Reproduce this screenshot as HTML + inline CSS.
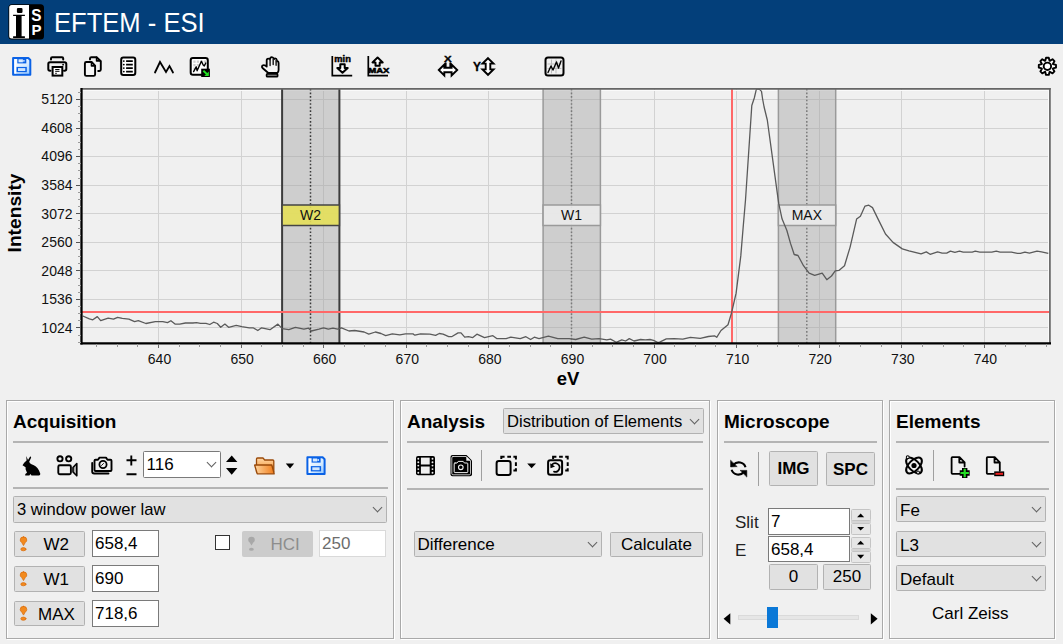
<!DOCTYPE html>
<html><head><meta charset="utf-8">
<style>
html,body{margin:0;padding:0;}
body{width:1063px;height:644px;overflow:hidden;background:#f0f0f0;position:relative;font-family:"Liberation Sans",sans-serif;color:#000;}
.abs{position:absolute;}
.title{position:absolute;left:0;top:0;width:1063px;height:44px;background:#033f7a;}
.ttl{position:absolute;left:54px;top:7px;font-size:27.5px;color:#fff;letter-spacing:0px;transform:scaleX(0.93);transform-origin:0 0;white-space:nowrap;}
.panel{position:absolute;top:400px;height:239px;border:1px solid #a9a9a9;box-shadow:1px 1px 0 #fff, inset 1px 1px 0 #fff;box-sizing:border-box;}
.ptitle{position:absolute;font-size:19px;font-weight:bold;white-space:nowrap;margin-top:1px;}
.sep{position:absolute;height:2px;background:#b4b4b4;}
.vsep{position:absolute;width:1px;background:#a0a0a0;}
.combo{position:absolute;box-sizing:border-box;background:#e1e1e1;border:1px solid #b2b2b2;border-radius:1.5px;font-size:17px;white-space:nowrap;}
.combo span{position:absolute;left:4px;}
.caret{position:absolute;width:6px;height:6px;border-right:1.3px solid #606060;border-bottom:1.3px solid #606060;transform:rotate(45deg);}
.btn{position:absolute;box-sizing:border-box;background:#e1e1e1;border:1px solid #b2b2b2;border-radius:1.5px;font-size:17px;white-space:nowrap;text-align:center;}
.inp{position:absolute;box-sizing:border-box;background:#fff;border:1px solid #7a7a7a;font-size:17px;white-space:nowrap;}
.inp span{position:absolute;left:2px;}
.lbl{position:absolute;font-size:17px;white-space:nowrap;}
</style></head>
<body>
<div class="title">
 <svg class="abs" style="left:6px;top:2px" width="40" height="40" viewBox="0 0 40 40">
  <rect x="2.4" y="2.2" width="35.6" height="35.4" rx="3.5" fill="#000"/>
  <path d="M5.7 3.1 H23 V36.6 H5.7 A2.5 2.5 0 0 1 3.2 34.1 V5.6 A2.5 2.5 0 0 1 5.7 3.1Z" fill="#fff"/>
  <rect x="10.9" y="5.9" width="5.6" height="5" rx="1.2" fill="#000"/>
  <path d="M7.1 12.7 H18.9 V14 H15.6 V34.3 H18.9 V36 H7.1 V34.3 H10 V14 H7.1Z" fill="#000"/>
  <text x="30.3" y="18.6" text-anchor="middle" font-family="Liberation Sans" font-weight="bold" font-size="17" fill="#fff" transform="translate(30.3,0) scale(0.9,1) translate(-30.3,0)">S</text>
  <text x="30.6" y="33.2" text-anchor="middle" font-family="Liberation Sans" font-weight="bold" font-size="15" fill="#fff">P</text>
 </svg>
 <div class="ttl">EFTEM - ESI</div>
</div>
<svg class="abs" style="left:0;top:0" width="1063" height="400" font-family="Liberation Sans, sans-serif"><line x1="158.5" y1="89" x2="158.5" y2="343" stroke="#d2d2d2" stroke-width="1"/><line x1="241.5" y1="89" x2="241.5" y2="343" stroke="#d2d2d2" stroke-width="1"/><line x1="323.5" y1="89" x2="323.5" y2="343" stroke="#d2d2d2" stroke-width="1"/><line x1="406.5" y1="89" x2="406.5" y2="343" stroke="#d2d2d2" stroke-width="1"/><line x1="488.5" y1="89" x2="488.5" y2="343" stroke="#d2d2d2" stroke-width="1"/><line x1="571.5" y1="89" x2="571.5" y2="343" stroke="#d2d2d2" stroke-width="1"/><line x1="654.5" y1="89" x2="654.5" y2="343" stroke="#d2d2d2" stroke-width="1"/><line x1="736.5" y1="89" x2="736.5" y2="343" stroke="#d2d2d2" stroke-width="1"/><line x1="819.5" y1="89" x2="819.5" y2="343" stroke="#d2d2d2" stroke-width="1"/><line x1="901.5" y1="89" x2="901.5" y2="343" stroke="#d2d2d2" stroke-width="1"/><line x1="984.5" y1="89" x2="984.5" y2="343" stroke="#d2d2d2" stroke-width="1"/><line x1="82" y1="327.5" x2="1049" y2="327.5" stroke="#d2d2d2" stroke-width="1"/><line x1="82" y1="299.5" x2="1049" y2="299.5" stroke="#d2d2d2" stroke-width="1"/><line x1="82" y1="270.5" x2="1049" y2="270.5" stroke="#d2d2d2" stroke-width="1"/><line x1="82" y1="242.5" x2="1049" y2="242.5" stroke="#d2d2d2" stroke-width="1"/><line x1="82" y1="213.5" x2="1049" y2="213.5" stroke="#d2d2d2" stroke-width="1"/><line x1="82" y1="185.5" x2="1049" y2="185.5" stroke="#d2d2d2" stroke-width="1"/><line x1="82" y1="156.5" x2="1049" y2="156.5" stroke="#d2d2d2" stroke-width="1"/><line x1="82" y1="128.5" x2="1049" y2="128.5" stroke="#d2d2d2" stroke-width="1"/><line x1="82" y1="99.5" x2="1049" y2="99.5" stroke="#d2d2d2" stroke-width="1"/><line x1="82" y1="90.5" x2="1048.5" y2="90.5" stroke="#fafafa" stroke-width="1"/><line x1="1048.5" y1="90" x2="1048.5" y2="342" stroke="#fafafa" stroke-width="1"/><rect x="282.1" y="89" width="57.3" height="254" fill="rgba(160,160,160,0.42)"/><line x1="310.5" y1="89" x2="310.5" y2="343" stroke="#3a3a3a" stroke-width="1.5" stroke-dasharray="1.6,1.96"/><line x1="282.1" y1="89" x2="282.1" y2="343" stroke="#3c3c3c" stroke-width="2"/><line x1="339.4" y1="89" x2="339.4" y2="343" stroke="#3c3c3c" stroke-width="2"/><rect x="282.1" y="205" width="57.3" height="20.5" fill="#e6e05a" fill-opacity="0.9" stroke="#444" stroke-width="1.5"/><text x="310.5" y="220" text-anchor="middle" font-size="14" fill="#111">W2</text><rect x="543.1" y="89" width="57.3" height="254" fill="rgba(160,160,160,0.42)"/><line x1="571.5" y1="89" x2="571.5" y2="343" stroke="#7a7a7a" stroke-width="1.5" stroke-dasharray="1.6,1.96"/><line x1="543.1" y1="89" x2="543.1" y2="343" stroke="#9a9a9a" stroke-width="1.5"/><line x1="600.4" y1="89" x2="600.4" y2="343" stroke="#9a9a9a" stroke-width="1.5"/><rect x="543.1" y="205" width="57.3" height="20.5" fill="#ebebeb" fill-opacity="0.9" stroke="#9a9a9a" stroke-width="1.5"/><text x="571.5" y="220" text-anchor="middle" font-size="14" fill="#111">W1</text><rect x="778.4" y="89" width="57.3" height="254" fill="rgba(160,160,160,0.42)"/><line x1="806.8" y1="89" x2="806.8" y2="343" stroke="#7a7a7a" stroke-width="1.5" stroke-dasharray="1.6,1.96"/><line x1="778.4" y1="89" x2="778.4" y2="343" stroke="#9a9a9a" stroke-width="1.5"/><line x1="835.7" y1="89" x2="835.7" y2="343" stroke="#9a9a9a" stroke-width="1.5"/><rect x="778.4" y="205" width="57.3" height="20.5" fill="#ebebeb" fill-opacity="0.9" stroke="#9a9a9a" stroke-width="1.5"/><text x="806.8" y="220" text-anchor="middle" font-size="14" fill="#111">MAX</text><line x1="82" y1="312" x2="1049" y2="312" stroke="#ff6868" stroke-width="2"/><line x1="732" y1="89" x2="732" y2="343" stroke="#ff6868" stroke-width="2"/><polyline points="82.8,316 89.4,318.8 92.8,319.8 97.3,316.6 100.7,320.7 108.2,318.2 113.5,319.2 117.6,317.3 122.3,318.4 128.9,319.2 134.6,321.6 138.3,320.7 145.9,323.5 155.3,321.6 162.8,321.6 167.5,322.6 170.9,320.7 175,324.1 179.7,324.1 185.4,323 192.9,323 196.6,322.6 200.4,323.3 206,323.3 209.8,324.5 213.6,322.2 217.3,323.5 220.7,327.3 224.9,324.1 228.6,327.3 236.2,325.4 241.8,326.7 249.3,327.8 253.1,327.8 257.8,330.5 261.6,327.8 270,329.7 277.9,324.1 282.2,328.6 288.8,329.7 295.4,327.3 303.9,329.2 308.6,328.2 311.4,331 318.9,329.2 323.6,327.8 328.3,329.2 333,328.2 337.7,329.2 341.5,327.8 349,331 354.7,330.5 364.1,332 368.8,334.2 375.4,332 381,333.5 385.7,335.7 392.3,333.9 399.8,334.8 405.5,333.9 413,333.9 414.9,335.2 420.5,333.9 429.9,334.2 435.6,335.4 439.3,333.5 443.1,334.2 448.7,336.7 451.6,336.7 458.1,332.9 461,332.9 464.7,337.2 468.5,336.7 472.8,337.6 476.9,334.2 484.5,337.6 492.9,335.7 496.7,338.6 506.1,338.6 510.8,337.2 520.2,338.6 525.9,336.7 530.6,339.5 534.3,337.2 539,338.6 548.4,336.1 557.8,338.6 569.1,338.6 575.7,339.5 584.2,337.2 591.7,339.1 599.2,338.6 606.8,339.9 610.5,339.1 616.2,342.3 621.8,339.9 625.6,341 629.3,338.6 634,341 640.6,339.5 645.3,339.9 650,339.5 653.5,340.3 658,342.5 660.2,341.8 666.3,338.8 674,338.6 682.8,339.2 690.4,337.3 700.2,338.3 708.4,336.5 714.5,335.8 716.7,337.3 721,330.5 728,324.7 731.5,313 736.1,293.2 740.8,255.9 743.1,228 745.5,200 751.8,105.5 754.3,98 756.2,89.8 757.6,89 759.5,89.4 761.5,91.4 762.6,99 764.1,107 767.3,120 778.7,203.4 782.1,219.1 786.8,230.3 790.5,243.4 794.2,254.5 798,255.5 803.5,265.7 809.1,273.2 814.7,275.4 822.2,273.2 826.8,279.7 831.5,276 835.2,270.9 838.9,270.4 844.5,265.7 850.1,247.1 856.6,219.1 860.4,216.3 865,206.1 868.8,205.2 872.5,207.6 878.1,219.1 885.5,234 893,242.4 902.3,248.9 909,250.9 921.1,253.9 926.3,251.9 930.1,254.3 937.6,251.9 942.1,253.1 946.7,253.1 950.4,251.2 954.9,252.4 959.5,251.2 963.2,252.1 972.2,252.1 975.3,251.2 979.8,252.1 991.8,252.1 996.3,251.2 1000.1,252.1 1011.4,252.1 1017.4,253.4 1020.4,253.4 1024.9,252.1 1029.4,253.1 1037,251.2 1041.5,251.9 1048.3,253.4" fill="none" stroke="#5a5a5a" stroke-width="1.3" stroke-linejoin="round"/><line x1="81" y1="88.9" x2="1050.6" y2="88.9" stroke="#666" stroke-width="1.7"/><line x1="1049.9" y1="88" x2="1049.9" y2="344" stroke="#666" stroke-width="1.7"/><line x1="81.5" y1="88" x2="81.5" y2="344.6" stroke="#000" stroke-width="2.3"/><line x1="80.4" y1="343.4" x2="1051" y2="343.4" stroke="#000" stroke-width="2.3"/><line x1="78" y1="342.5" x2="81" y2="342.5" stroke="#999" stroke-width="1"/><line x1="78" y1="335.5" x2="81" y2="335.5" stroke="#999" stroke-width="1"/><line x1="76" y1="327.5" x2="81" y2="327.5" stroke="#555" stroke-width="1"/><line x1="78" y1="320.5" x2="81" y2="320.5" stroke="#999" stroke-width="1"/><line x1="78" y1="313.5" x2="81" y2="313.5" stroke="#999" stroke-width="1"/><line x1="78" y1="306.5" x2="81" y2="306.5" stroke="#999" stroke-width="1"/><line x1="76" y1="299.5" x2="81" y2="299.5" stroke="#555" stroke-width="1"/><line x1="78" y1="292.5" x2="81" y2="292.5" stroke="#999" stroke-width="1"/><line x1="78" y1="285.5" x2="81" y2="285.5" stroke="#999" stroke-width="1"/><line x1="78" y1="278.5" x2="81" y2="278.5" stroke="#999" stroke-width="1"/><line x1="76" y1="270.5" x2="81" y2="270.5" stroke="#555" stroke-width="1"/><line x1="78" y1="263.5" x2="81" y2="263.5" stroke="#999" stroke-width="1"/><line x1="78" y1="256.5" x2="81" y2="256.5" stroke="#999" stroke-width="1"/><line x1="78" y1="249.5" x2="81" y2="249.5" stroke="#999" stroke-width="1"/><line x1="76" y1="242.5" x2="81" y2="242.5" stroke="#555" stroke-width="1"/><line x1="78" y1="235.5" x2="81" y2="235.5" stroke="#999" stroke-width="1"/><line x1="78" y1="228.5" x2="81" y2="228.5" stroke="#999" stroke-width="1"/><line x1="78" y1="220.5" x2="81" y2="220.5" stroke="#999" stroke-width="1"/><line x1="76" y1="213.5" x2="81" y2="213.5" stroke="#555" stroke-width="1"/><line x1="78" y1="206.5" x2="81" y2="206.5" stroke="#999" stroke-width="1"/><line x1="78" y1="199.5" x2="81" y2="199.5" stroke="#999" stroke-width="1"/><line x1="78" y1="192.5" x2="81" y2="192.5" stroke="#999" stroke-width="1"/><line x1="76" y1="185.5" x2="81" y2="185.5" stroke="#555" stroke-width="1"/><line x1="78" y1="178.5" x2="81" y2="178.5" stroke="#999" stroke-width="1"/><line x1="78" y1="170.5" x2="81" y2="170.5" stroke="#999" stroke-width="1"/><line x1="78" y1="163.5" x2="81" y2="163.5" stroke="#999" stroke-width="1"/><line x1="76" y1="156.5" x2="81" y2="156.5" stroke="#555" stroke-width="1"/><line x1="78" y1="149.5" x2="81" y2="149.5" stroke="#999" stroke-width="1"/><line x1="78" y1="142.5" x2="81" y2="142.5" stroke="#999" stroke-width="1"/><line x1="78" y1="135.5" x2="81" y2="135.5" stroke="#999" stroke-width="1"/><line x1="76" y1="128.5" x2="81" y2="128.5" stroke="#555" stroke-width="1"/><line x1="78" y1="121.5" x2="81" y2="121.5" stroke="#999" stroke-width="1"/><line x1="78" y1="113.5" x2="81" y2="113.5" stroke="#999" stroke-width="1"/><line x1="78" y1="106.5" x2="81" y2="106.5" stroke="#999" stroke-width="1"/><line x1="76" y1="99.5" x2="81" y2="99.5" stroke="#555" stroke-width="1"/><line x1="78" y1="92.5" x2="81" y2="92.5" stroke="#999" stroke-width="1"/><text x="72.5" y="332.6" text-anchor="end" font-size="14" fill="#111">1024</text><text x="72.5" y="304.1" text-anchor="end" font-size="14" fill="#111">1536</text><text x="72.5" y="275.5" text-anchor="end" font-size="14" fill="#111">2048</text><text x="72.5" y="247.0" text-anchor="end" font-size="14" fill="#111">2560</text><text x="72.5" y="218.5" text-anchor="end" font-size="14" fill="#111">3072</text><text x="72.5" y="189.9" text-anchor="end" font-size="14" fill="#111">3584</text><text x="72.5" y="161.4" text-anchor="end" font-size="14" fill="#111">4096</text><text x="72.5" y="132.8" text-anchor="end" font-size="14" fill="#111">4608</text><text x="72.5" y="104.3" text-anchor="end" font-size="14" fill="#111">5120</text><line x1="96.5" y1="344" x2="96.5" y2="347" stroke="#999" stroke-width="1"/><line x1="117.5" y1="344" x2="117.5" y2="347" stroke="#999" stroke-width="1"/><line x1="137.5" y1="344" x2="137.5" y2="347" stroke="#999" stroke-width="1"/><line x1="158.5" y1="344" x2="158.5" y2="348" stroke="#666" stroke-width="1"/><text x="159.5" y="363.6" text-anchor="middle" font-size="14" fill="#111">640</text><line x1="179.5" y1="344" x2="179.5" y2="347" stroke="#999" stroke-width="1"/><line x1="199.5" y1="344" x2="199.5" y2="347" stroke="#999" stroke-width="1"/><line x1="220.5" y1="344" x2="220.5" y2="347" stroke="#999" stroke-width="1"/><line x1="241.5" y1="344" x2="241.5" y2="348" stroke="#666" stroke-width="1"/><text x="242.1" y="363.6" text-anchor="middle" font-size="14" fill="#111">650</text><line x1="261.5" y1="344" x2="261.5" y2="347" stroke="#999" stroke-width="1"/><line x1="282.5" y1="344" x2="282.5" y2="347" stroke="#999" stroke-width="1"/><line x1="303.5" y1="344" x2="303.5" y2="347" stroke="#999" stroke-width="1"/><line x1="323.5" y1="344" x2="323.5" y2="348" stroke="#666" stroke-width="1"/><text x="324.7" y="363.6" text-anchor="middle" font-size="14" fill="#111">660</text><line x1="344.5" y1="344" x2="344.5" y2="347" stroke="#999" stroke-width="1"/><line x1="364.5" y1="344" x2="364.5" y2="347" stroke="#999" stroke-width="1"/><line x1="385.5" y1="344" x2="385.5" y2="347" stroke="#999" stroke-width="1"/><line x1="406.5" y1="344" x2="406.5" y2="348" stroke="#666" stroke-width="1"/><text x="407.3" y="363.6" text-anchor="middle" font-size="14" fill="#111">670</text><line x1="426.5" y1="344" x2="426.5" y2="347" stroke="#999" stroke-width="1"/><line x1="447.5" y1="344" x2="447.5" y2="347" stroke="#999" stroke-width="1"/><line x1="468.5" y1="344" x2="468.5" y2="347" stroke="#999" stroke-width="1"/><line x1="488.5" y1="344" x2="488.5" y2="348" stroke="#666" stroke-width="1"/><text x="489.9" y="363.6" text-anchor="middle" font-size="14" fill="#111">680</text><line x1="509.5" y1="344" x2="509.5" y2="347" stroke="#999" stroke-width="1"/><line x1="530.5" y1="344" x2="530.5" y2="347" stroke="#999" stroke-width="1"/><line x1="550.5" y1="344" x2="550.5" y2="347" stroke="#999" stroke-width="1"/><line x1="571.5" y1="344" x2="571.5" y2="348" stroke="#666" stroke-width="1"/><text x="572.5" y="363.6" text-anchor="middle" font-size="14" fill="#111">690</text><line x1="592.5" y1="344" x2="592.5" y2="347" stroke="#999" stroke-width="1"/><line x1="612.5" y1="344" x2="612.5" y2="347" stroke="#999" stroke-width="1"/><line x1="633.5" y1="344" x2="633.5" y2="347" stroke="#999" stroke-width="1"/><line x1="654.5" y1="344" x2="654.5" y2="348" stroke="#666" stroke-width="1"/><text x="655.0" y="363.6" text-anchor="middle" font-size="14" fill="#111">700</text><line x1="674.5" y1="344" x2="674.5" y2="347" stroke="#999" stroke-width="1"/><line x1="695.5" y1="344" x2="695.5" y2="347" stroke="#999" stroke-width="1"/><line x1="715.5" y1="344" x2="715.5" y2="347" stroke="#999" stroke-width="1"/><line x1="736.5" y1="344" x2="736.5" y2="348" stroke="#666" stroke-width="1"/><text x="737.6" y="363.6" text-anchor="middle" font-size="14" fill="#111">710</text><line x1="757.5" y1="344" x2="757.5" y2="347" stroke="#999" stroke-width="1"/><line x1="777.5" y1="344" x2="777.5" y2="347" stroke="#999" stroke-width="1"/><line x1="798.5" y1="344" x2="798.5" y2="347" stroke="#999" stroke-width="1"/><line x1="819.5" y1="344" x2="819.5" y2="348" stroke="#666" stroke-width="1"/><text x="820.2" y="363.6" text-anchor="middle" font-size="14" fill="#111">720</text><line x1="839.5" y1="344" x2="839.5" y2="347" stroke="#999" stroke-width="1"/><line x1="860.5" y1="344" x2="860.5" y2="347" stroke="#999" stroke-width="1"/><line x1="881.5" y1="344" x2="881.5" y2="347" stroke="#999" stroke-width="1"/><line x1="901.5" y1="344" x2="901.5" y2="348" stroke="#666" stroke-width="1"/><text x="902.8" y="363.6" text-anchor="middle" font-size="14" fill="#111">730</text><line x1="922.5" y1="344" x2="922.5" y2="347" stroke="#999" stroke-width="1"/><line x1="943.5" y1="344" x2="943.5" y2="347" stroke="#999" stroke-width="1"/><line x1="963.5" y1="344" x2="963.5" y2="347" stroke="#999" stroke-width="1"/><line x1="984.5" y1="344" x2="984.5" y2="348" stroke="#666" stroke-width="1"/><text x="985.4" y="363.6" text-anchor="middle" font-size="14" fill="#111">740</text><line x1="1005.5" y1="344" x2="1005.5" y2="347" stroke="#999" stroke-width="1"/><line x1="1025.5" y1="344" x2="1025.5" y2="347" stroke="#999" stroke-width="1"/><line x1="1046.5" y1="344" x2="1046.5" y2="347" stroke="#999" stroke-width="1"/><text x="568" y="384.5" text-anchor="middle" font-size="18.5" font-weight="bold" fill="#000">eV</text><text transform="translate(21.3,213) rotate(-90)" text-anchor="middle" font-size="19.2" font-weight="bold" fill="#000">Intensity</text></svg>
<!-- toolbar -->
<svg class="abs" style="left:0;top:50px" width="1063" height="32" viewBox="0 50 1063 32" fill="none" stroke="#000" stroke-width="2" stroke-linejoin="round" stroke-linecap="round">
 <!-- save blue -->
 <defs><linearGradient id="flop2" x1="0" y1="0" x2="1" y2="1"><stop offset="0" stop-color="#ffffff"/><stop offset="0.6" stop-color="#d6ebff"/><stop offset="1" stop-color="#8cc4ff"/></linearGradient></defs>
 <g>
  <path d="M13.1 58 H28.3 L30.3 60 V74.7 H13.1Z" fill="url(#flop2)" stroke="#0a62e6" stroke-width="2"/>
  <rect x="14.6" y="59.5" width="1.6" height="14" fill="#fff" stroke="none"/>
  <rect x="17.3" y="58.2" width="9" height="5.2" fill="#0a62e6" stroke="none"/>
  <rect x="18.5" y="59.3" width="4.4" height="3" fill="#d8ebff" stroke="none"/>
  <circle cx="23.9" cy="60.8" r="0.9" fill="#d8ebff" stroke="none"/>
  <rect x="16.5" y="66.9" width="10.3" height="5.3" fill="#0a62e6" stroke="none"/>
  <rect x="18" y="68.1" width="7.3" height="2.9" fill="#cfe6ff" stroke="none"/>
 </g>
 <!-- printer -->
 <g>
  <path d="M51 59.5 V58.5 Q51 57.3 52.2 57.3 H62 Q63.2 57.3 63.2 58.5 V59.5" stroke-width="2"/>
  <path d="M50.5 70.8 H50 Q48.3 70.8 48.3 69 V64 Q48.3 62.2 50 62.2 H64.5 Q66.3 62.2 66.3 64 V69 Q66.3 70.8 64.5 70.8 H64" stroke-width="2"/>
  <circle cx="63.1" cy="64.7" r="0.9" fill="#000" stroke="none"/>
  <rect x="52.6" y="67" width="9.7" height="8.6" fill="#fff" stroke-width="2" stroke-linejoin="miter"/>
  <path d="M55.2 69.5 H59.5 M55.2 71.3 H59.5 M55.2 73.3 H56.8" stroke-width="1" stroke-linecap="butt"/>
 </g>
 <!-- copy -->
 <g>
  <path d="M90 59.4 V58.6 Q90 57.2 91.4 57.2 H96.6 L100.8 61.2 V69.6 Q100.8 71 99.4 71 H98.2" stroke-width="1.9"/>
  <path d="M96.6 57.4 V60.9 H100.4" stroke-width="1.6"/>
  <path d="M86.3 62 H91.6 L95.1 65.6 V74.5 Q95.1 75.9 93.7 75.9 H86.3 Q84.9 75.9 84.9 74.5 V63.4 Q84.9 62 86.3 62Z" fill="#f6f6f6" stroke-width="1.9"/>
  <path d="M91.5 62.2 V65.9 H95" stroke-width="1.6"/>
 </g>
 <!-- list -->
 <g>
  <rect x="121.2" y="57.6" width="14.1" height="17.3" rx="2.2" fill="#fff" stroke-width="2"/>
  <path d="M126.1 61.1 H132.8 M126.1 64.6 H132.8 M126.1 68.1 H132.8 M126.1 71.6 H132.8" stroke-width="1.6" stroke-linecap="butt"/>
  <g fill="#000" stroke="none"><circle cx="123.8" cy="61.1" r="0.9"/><circle cx="123.8" cy="64.6" r="0.9"/><circle cx="123.8" cy="68.1" r="0.9"/><circle cx="123.8" cy="71.6" r="0.9"/></g>
 </g>
 <!-- zigzag -->
 <path d="M155 72.5 L160 62 L166 72 L169.5 66 L173 72.5" stroke-width="1.8" stroke-linejoin="miter"/>
 <!-- chart export -->
 <g>
  <rect x="190.7" y="58" width="17.1" height="16.7" rx="2.2" fill="#fff" stroke-width="2"/>
  <g fill="#cfcfcf" stroke="none"><rect x="193.3" y="60.5" width="2.3" height="2.3"/><rect x="196.8" y="60.5" width="2.3" height="2.3"/><rect x="200.3" y="60.5" width="2.3" height="2.3"/><rect x="203.8" y="60.5" width="2.3" height="2.3"/><rect x="193.3" y="64" width="2.3" height="2.3"/><rect x="196.8" y="64" width="2.3" height="2.3"/><rect x="193.3" y="67.5" width="2.3" height="2.3"/></g>
  <path d="M193.6 71.6 L196.2 66.8 L197.1 70.7 L201.4 61.3 L203.2 65 L204.3 65.9 L205.8 63" stroke-width="1.4"/>
  <rect x="201.2" y="68.7" width="8.7" height="8.3" fill="#000" stroke="none"/>
  <path d="M203.4 70.7 L207.8 75" stroke="#22e022" stroke-width="1.9" stroke-linecap="butt"/>
  <path d="M208.8 71.5 V76 H204.3Z" fill="#22e022" stroke="none"/>
 </g>
 <!-- hand -->
 <path d="M268.3 73 L262.8 68.2 Q261.2 66.8 262.6 65.5 Q263.8 64.6 265.2 65.5 L266.7 66.6 V60.2 Q266.7 58.6 268.3 58.6 Q269.6 58.6 269.9 59.6 Q270.2 57.2 271.8 57.2 Q273.4 57.2 273.8 59.3 Q274.2 58.4 275.2 58.4 Q276.6 58.4 276.8 60.2 V61.5 Q277 61 277.6 61.2 Q278.6 61.5 278.6 63 V70 Q278.6 72 277.3 73Z" stroke-width="1.8" fill="#f4f4f4"/>
 <path d="M270.1 59.8 V65.6 M273.2 59.6 V64.6 M276.1 60.5 V65.3" stroke-width="1.5" stroke="#222"/>
 <rect x="266.6" y="73.9" width="11" height="2.8" rx="0.8" fill="#9a9a9a" stroke-width="1.7"/>
 <!-- min -->
 <g>
  <path d="M332.3 56 V75.6 H352.2" stroke-width="1.7" stroke-linecap="butt" stroke-linejoin="miter"/>
  <text x="342.6" y="62.3" text-anchor="middle" font-size="8.6" font-weight="bold" fill="#000" stroke="#000" stroke-width="0.45" font-family="Liberation Sans" transform="translate(342.6,0) scale(1.08,1) translate(-342.6,0)">min</text>
  <path d="M340.3 64.3 H344.7 V67.9 H347.7 L342.5 72.8 L337.3 67.9 H340.3Z" stroke-width="2" fill="#fff"/>
 </g>
 <!-- max -->
 <g>
  <path d="M368.3 56 V75.6 H388" stroke-width="1.7" stroke-linecap="butt" stroke-linejoin="miter"/>
  <path d="M375.5 65.8 H379.7 V62.4 H382.7 L377.6 57.5 L372.5 62.4 H375.5Z" stroke-width="2" fill="#fff"/>
  <text x="378.8" y="73.2" text-anchor="middle" font-size="6.6" font-weight="bold" fill="#000" stroke="#000" stroke-width="0.5" font-family="Liberation Sans" transform="translate(378.8,0) scale(1.45,1) translate(-378.8,0)">MAX</text>
 </g>
 <!-- X arrows -->
 <g>
  <text x="447.9" y="62.5" text-anchor="middle" font-size="9.2" font-weight="bold" fill="#000" stroke="#000" stroke-width="0.4" font-family="Liberation Sans" transform="translate(447.9,0) scale(1.25,1) translate(-447.9,0)">X</text>
  <path d="M438.8 70 L444.3 64.5 V67.8 H451.6 V64.5 L457.2 70 L451.6 75.5 V72.2 H444.3 V75.5Z" stroke-width="1.9" fill="#fff" stroke-linejoin="miter"/>
  <path d="M445.8 63 V67 M450.2 63 V67" stroke-width="1.6"/>
 </g>
 <!-- Y arrows -->
 <g>
  <text x="477.1" y="70.7" text-anchor="middle" font-size="12" font-weight="bold" fill="#000" stroke="#000" stroke-width="0.3" font-family="Liberation Sans">Y</text>
  <path d="M488 58.2 L493.5 63.6 H490.3 V69.4 H493.5 L488 74.8 L482.5 69.4 H485.7 V63.6 H482.5Z" stroke-width="1.9" fill="#fff" stroke-linejoin="miter"/>
 </g>
 <!-- chart icon -->
 <g>
  <rect x="545.5" y="57.5" width="18" height="18" rx="2.5"/>
  <path d="M548 64 H561 M548 68.5 H561 M551.5 60 V73 M556 60 V73" stroke="#bbb" stroke-width="1"/>
  <path d="M548 72.5 L551 66 L553 70 L556.5 62 L558.5 68 L561 61" stroke-width="1.4"/>
 </g>
 <!-- gear -->
 <g transform="translate(1047.4,66.3)">
  <path d="M-2.15,-5.60 L-1.36,-8.59 L1.36,-8.59 L2.15,-5.60 L2.44,-5.48 L5.11,-7.04 L7.04,-5.11 L5.48,-2.44 L5.60,-2.15 L8.59,-1.36 L8.59,1.36 L5.60,2.15 L5.48,2.44 L7.04,5.11 L5.11,7.04 L2.44,5.48 L2.15,5.60 L1.36,8.59 L-1.36,8.59 L-2.15,5.60 L-2.44,5.48 L-5.11,7.04 L-7.04,5.11 L-5.48,2.44 L-5.60,2.15 L-8.59,1.36 L-8.59,-1.36 L-5.60,-2.15 L-5.48,-2.44 L-7.04,-5.11 L-5.11,-7.04 L-2.44,-5.48Z" stroke-width="1.9" fill="#fff"/>
  <circle r="3.7" stroke-width="1.9"/>
 </g>
</svg>

<!-- panels -->
<div class="panel" style="left:6px;width:388px"></div>
<div class="panel" style="left:400px;width:310px"></div>
<div class="panel" style="left:717px;width:166px"></div>
<div class="panel" style="left:889px;width:166px"></div>

<!-- Acquisition -->
<div class="ptitle" style="left:13px;top:410px">Acquisition</div>
<div class="sep" style="left:13px;top:441px;width:375px"></div>
<div class="sep" style="left:13px;top:487px;width:375px"></div>
<div class="combo" style="left:143px;top:451px;width:78px;height:27px;background:#fff;border-color:#7a7a7a"><span style="top:3px;left:2.5px">116</span><i class="caret" style="left:64px;top:7px"></i></div>
<div class="combo" style="left:13px;top:496px;width:374px;height:27px"><span style="top:3px;left:3px;font-size:16.6px">3 window power law</span><i class="caret" style="left:360px;top:7px"></i></div>
<div class="btn" style="left:14px;top:531px;width:71px;height:26px"></div>
<div class="lbl" style="left:43.5px;top:535px">W2</div>
<div class="inp" style="left:92px;top:530px;width:67px;height:27px"><span style="top:3px">658,4</span></div>
<div class="btn" style="left:14px;top:566px;width:71px;height:26px"></div>
<div class="lbl" style="left:43.5px;top:570px">W1</div>
<div class="inp" style="left:92px;top:565px;width:67px;height:27px"><span style="top:3px">690</span></div>
<div class="btn" style="left:14px;top:601px;width:71px;height:25px"></div>
<div class="lbl" style="left:38px;top:604.5px">MAX</div>
<div class="inp" style="left:92px;top:600px;width:67px;height:27px"><span style="top:3px">718,6</span></div>
<div class="abs" style="left:215px;top:535px;width:15px;height:15px;box-sizing:border-box;border:1.2px solid #333;background:#fff"></div>
<div class="btn" style="left:242px;top:531px;width:71px;height:26px;background:#cccccc;border-color:#cccccc;color:#8a8a8a"></div>
<div class="lbl" style="left:270.5px;top:535px;color:#8d8d8d">HCI</div>
<div class="inp" style="left:319px;top:530px;width:67px;height:27px;border-color:#d9d9d9;color:#6d6d6d"><span style="top:3px">250</span></div>

<!-- Analysis -->
<div class="ptitle" style="left:407px;top:410px">Analysis</div>
<div class="combo" style="left:503px;top:408px;width:201px;height:26px"><span style="top:3px;left:3px;font-size:16.6px">Distribution of Elements</span><i class="caret" style="left:187px;top:7px"></i></div>
<div class="sep" style="left:407px;top:441px;width:296px"></div>
<div class="sep" style="left:407px;top:488px;width:296px"></div>
<div class="vsep" style="left:481px;top:450px;height:31px"></div>
<div class="combo" style="left:414px;top:531px;width:188px;height:26px"><span style="top:3px;left:2.5px">Difference</span><i class="caret" style="left:174px;top:7px"></i></div>
<div class="btn" style="left:610px;top:532px;width:93px;height:25px;line-height:23px">Calculate</div>

<!-- Microscope -->
<div class="ptitle" style="left:724px;top:410px">Microscope</div>
<div class="sep" style="left:724px;top:441px;width:153px"></div>
<div class="vsep" style="left:758px;top:452px;height:34px"></div>
<div class="btn" style="left:769px;top:451px;width:49px;height:35px;font-weight:bold;font-size:17px;line-height:33px">IMG</div>
<div class="btn" style="left:826px;top:452px;width:49px;height:34px;font-weight:bold;font-size:17px;line-height:33px">SPC</div>
<div class="lbl" style="left:735px;top:512.5px;color:#222">Slit</div>
<div class="lbl" style="left:735px;top:540.5px;color:#222">E</div>
<div class="inp" style="left:768px;top:508px;width:82px;height:27px"><span style="top:3px">7</span></div>
<div class="inp" style="left:768px;top:536px;width:82px;height:26px"><span style="top:3px">658,4</span></div>
<div class="abs" style="left:851px;top:520px;width:20px;height:3px;background:#d4d4d4"></div>
<div class="abs" style="left:851px;top:549px;width:20px;height:2px;background:#d4d4d4"></div>
<div class="btn" style="left:851px;top:509px;width:20px;height:12px;background:#e6e6e6;border-color:#c4c4c4"></div>
<div class="btn" style="left:851px;top:522.5px;width:20px;height:12px;background:#e6e6e6;border-color:#c4c4c4"></div>
<div class="btn" style="left:851px;top:537px;width:20px;height:12px;background:#e6e6e6;border-color:#c4c4c4"></div>
<div class="btn" style="left:851px;top:550.5px;width:20px;height:12px;background:#e6e6e6;border-color:#c4c4c4"></div>
<div class="btn" style="left:769px;top:564px;width:49px;height:26px;line-height:24px">0</div>
<div class="btn" style="left:823px;top:564px;width:48px;height:26px;line-height:24px">250</div>
<div class="abs" style="left:738px;top:615px;width:121px;height:5px;background:#e6e6e6;border:1px solid #dadada;box-sizing:border-box"></div>
<div class="abs" style="left:767px;top:607px;width:11px;height:21px;background:#0a78d7"></div>

<!-- Elements -->
<div class="ptitle" style="left:896px;top:410px">Elements</div>
<div class="sep" style="left:896px;top:441px;width:153px"></div>
<div class="sep" style="left:896px;top:488px;width:153px"></div>
<div class="vsep" style="left:933px;top:450px;height:31px"></div>
<div class="combo" style="left:896px;top:496px;width:150px;height:26px"><span style="top:3.5px;left:3px">Fe</span><i class="caret" style="left:136px;top:7px"></i></div>
<div class="combo" style="left:896px;top:531px;width:150px;height:26px"><span style="top:3.5px;left:3px">L3</span><i class="caret" style="left:136px;top:7px"></i></div>
<div class="combo" style="left:896px;top:565px;width:150px;height:26px"><span style="top:3.5px;left:3px">Default</span><i class="caret" style="left:136px;top:7px"></i></div>
<div class="lbl" style="left:932px;top:603.5px">Carl Zeiss</div>

<!-- panel icons -->
<svg class="abs" style="left:0;top:0;pointer-events:none" width="1063" height="644" viewBox="0 0 1063 644" fill="none" stroke="#000" stroke-width="2" stroke-linejoin="round" stroke-linecap="round">
 <!-- rabbit -->
 <path d="M26.2 456 L28 460 L30.3 456.3 L31.2 457.6 L29.2 461.8 Q29.6 463.6 31.5 464.2 Q36.5 465.5 39 470.5 L40.3 473.8 Q40.5 475.3 38.8 475.5 L31.5 475.5 L30.5 474 L29.3 475.5 L25.2 475.5 L25.3 474 L27 472.8 L25.6 469.3 L25.6 467.2 L22.5 465.2 L24.2 462.8 L26.6 460.6Z" fill="#000" stroke="none"/>
 <!-- video camera -->
 <circle cx="60" cy="458.8" r="2.6" stroke-width="1.9"/>
 <circle cx="68.7" cy="458.8" r="2.6" stroke-width="1.9"/>
 <rect x="58.3" y="465.2" width="12.6" height="9" rx="1.5" stroke-width="1.9"/>
 <path d="M76.8 463.5 L73 467.5 V472 L76.8 475.8Z" fill="#aaa" stroke-width="1.6"/>
 <!-- snapshot -->
 <path d="M92.2 463 V471.5 Q92.2 473.5 94.2 473.5 H108.5" stroke-width="1.9"/>
 <path d="M95.5 459.7 H98 L99.5 457.6 H106 L107.5 459.7 H110.5 Q111.5 459.7 111.5 460.7 V470 Q111.5 471 110.5 471 H95.5 Q94.5 471 94.5 470 V460.7 Q94.5 459.7 95.5 459.7Z" stroke-width="1.9"/>
 <circle cx="103" cy="464.5" r="3.6" stroke-width="1.8"/>
 <path d="M101.5 465.5 L103.5 463.5" stroke-width="0.9"/>
 <!-- plus minus -->
 <path d="M131.3 455.5 V465.5 M126.5 460.3 H136.5 M126.5 474.3 H136.5" stroke-width="1.9" stroke-linecap="butt"/>
 <!-- spinner -->
 <path d="M226 461.9 L231.7 455.5 L237.4 461.9Z M226 467.9 H237.4 L231.7 474.8Z" fill="#000" stroke="none"/>
 <!-- folder -->
 <defs>
  <linearGradient id="fold" x1="0" y1="0" x2="0" y2="1"><stop offset="0" stop-color="#ffd9a8"/><stop offset="1" stop-color="#f58a26"/></linearGradient>
  <linearGradient id="fold2" x1="0" y1="0" x2="1" y2="0"><stop offset="0" stop-color="#ffd6a0"/><stop offset="1" stop-color="#f07c1a"/></linearGradient>
  <linearGradient id="flop" x1="0" y1="0" x2="1" y2="1"><stop offset="0" stop-color="#bfe0ff"/><stop offset="0.5" stop-color="#5aa8ff"/><stop offset="1" stop-color="#1a78f0"/></linearGradient>
 </defs>
 <path d="M256.5 472 V459 Q256.5 458 257.5 458 H263 L264.7 460 H272.8 Q273.8 460 273.8 461 V472Z" fill="url(#fold)" stroke="#9a4a0a" stroke-width="1.3"/>
 <path d="M254.6 465 H271.8 L274.2 473.8 H257.2Z" fill="url(#fold2)" stroke="#9a4a0a" stroke-width="1.3"/>
 <!-- triangle -->
 <path d="M285.8 463.6 H294.2 L290 468.4Z" fill="#000" stroke="none"/>
 <!-- save -->
 <g transform="translate(294.3,399.2)">
  <path d="M13.1 58 H28.3 L30.3 60 V74.7 H13.1Z" fill="url(#flop2)" stroke="#0a62e6" stroke-width="2"/>
  <rect x="14.6" y="59.5" width="1.6" height="14" fill="#fff" stroke="none"/>
  <rect x="17.3" y="58.2" width="9" height="5.2" fill="#0a62e6" stroke="none"/>
  <rect x="18.5" y="59.3" width="4.4" height="3" fill="#d8ebff" stroke="none"/>
  <circle cx="23.9" cy="60.8" r="0.9" fill="#d8ebff" stroke="none"/>
  <rect x="16.5" y="66.9" width="10.3" height="5.3" fill="#0a62e6" stroke="none"/>
  <rect x="18" y="68.1" width="7.3" height="2.9" fill="#cfe6ff" stroke="none"/>
 </g>
 <!-- exclamations -->
 <g fill="#f28a1e" stroke="#d96a0a" stroke-width="0.7">
  <path d="M23.5 536.8 Q26.8 536.8 26.8 540 Q26.8 541.5 25.3 542.5 L23.5 545.6 L21.7 542.5 Q20.2 541.5 20.2 540 Q20.2 536.8 23.5 536.8Z"/>
  <ellipse cx="23.4" cy="549.2" rx="2.6" ry="1.6"/>
  <path d="M23.5 571.8 Q26.8 571.8 26.8 575 Q26.8 576.5 25.3 577.5 L23.5 580.6 L21.7 577.5 Q20.2 576.5 20.2 575 Q20.2 571.8 23.5 571.8Z"/>
  <ellipse cx="23.4" cy="584.2" rx="2.6" ry="1.6"/>
  <path d="M23.5 606.3 Q26.8 606.3 26.8 609.5 Q26.8 611 25.3 612 L23.5 615.1 L21.7 612 Q20.2 611 20.2 609.5 Q20.2 606.3 23.5 606.3Z"/>
  <ellipse cx="23.4" cy="618.7" rx="2.6" ry="1.6"/>
 </g>
 <g fill="#a8a8a8" stroke="none">
  <path d="M251.5 536.8 Q254.8 536.8 254.8 540 Q254.8 541.5 253.3 542.5 L251.5 545.6 L249.7 542.5 Q248.2 541.5 248.2 540 Q248.2 536.8 251.5 536.8Z"/>
  <ellipse cx="251.4" cy="549.2" rx="2.4" ry="1.5"/>
 </g>
</svg>

<svg class="abs" style="left:0;top:0;pointer-events:none" width="1063" height="644" viewBox="0 0 1063 644" fill="none" stroke="#000" stroke-width="2" stroke-linejoin="round" stroke-linecap="round">
 <!-- film -->
 <rect x="416" y="456" width="19" height="19.3" rx="2" fill="#000" stroke="none"/>
 <rect x="420.9" y="457.6" width="8.8" height="6.9" fill="#f0f0f0" stroke="none"/>
 <rect x="420.9" y="466.5" width="8.8" height="7.2" fill="#f0f0f0" stroke="none"/>
 <g fill="#f0f0f0" stroke="none">
  <circle cx="418.3" cy="458.7" r="0.95"/><circle cx="418.3" cy="462.2" r="0.95"/><circle cx="418.3" cy="465.6" r="0.95"/><circle cx="418.3" cy="469.1" r="0.95"/><circle cx="418.3" cy="472.7" r="0.95"/>
  <circle cx="432.5" cy="458.7" r="0.95"/><circle cx="432.5" cy="462.2" r="0.95"/><circle cx="432.5" cy="465.6" r="0.95"/><circle cx="432.5" cy="469.1" r="0.95"/><circle cx="432.5" cy="472.7" r="0.95"/>
 </g>
 <!-- camera doc -->
 <path d="M452.5 455 H466.5 L472 460.5 V474.3 Q472 476.3 470 476.3 H452.5 Q450.5 476.3 450.5 474.3 V457 Q450.5 455 452.5 455Z" fill="#000" stroke="none"/>
 <path d="M453 456.5 H466 L470.5 461 V473.5 Q470.5 474.8 469.2 474.8 H453 Q451.8 474.8 451.8 473.5 V457.8 Q451.8 456.5 453 456.5Z" stroke="#e8e8e8" stroke-width="0.8"/>
 <path d="M466.3 456.2 V460.8 H470.8Z" fill="#f0f0f0" stroke="none"/>
 <path d="M455 463 H457 L458.2 461.4 H463.2 L464.4 463 H467 Q467.8 463 467.8 463.8 V471.8 Q467.8 472.6 467 472.6 H455 Q454.2 472.6 454.2 471.8 V463.8 Q454.2 463 455 463Z" stroke="#f0f0f0" stroke-width="1"/>
 <circle cx="460.8" cy="467.3" r="2.3" stroke="#f0f0f0" stroke-width="1.1"/>
 <!-- dashed copy -->
 <rect x="496.6" y="461.1" width="14" height="14" rx="2.3" stroke-width="2"/>
 <path d="M501.3 459 V456.8 H504.6 M507.3 456.8 H511 M513.4 456.8 H515.9 V459.6 M515.9 462.2 V466 M515.9 468.2 V470.4 H513.4" stroke-width="2" stroke-linecap="butt" stroke-linejoin="miter"/>
 <path d="M527.2 463.6 H536 L531.6 468.2Z" fill="#000" stroke="none"/>
 <!-- restore -->
 <rect x="548.1" y="460.2" width="14" height="14.6" rx="2.3" stroke-width="2"/>
 <path d="M553.1 459 V456.8 H556.4 M559.1 456.8 H562.8 M565.2 456.8 H567.7 V459.6 M567.7 462.2 V466 M567.7 468.2 V470.4 H565.2" stroke-width="2" stroke-linecap="butt" stroke-linejoin="miter"/>
 <path d="M552 464.6 A4.3 4.3 0 1 1 554 471.6" stroke-width="1.7"/>
 <path d="M550.2 463.2 L550.5 468.2 L555 466.6Z" fill="#000" stroke="none"/>
 <!-- refresh -->
 <path d="M733.5 464.8 A7 6.8 0 0 1 745.5 467.2" stroke-width="2.1" stroke-linecap="butt"/>
 <path d="M730.6 460.6 L730.6 466.9 L736.8 466.6Z" fill="#000" stroke="#000" stroke-width="0.6"/>
 <path d="M743.8 472 A7 6.8 0 0 1 731.6 469.8" stroke-width="2.1" stroke-linecap="butt"/>
 <path d="M740.5 470.4 L746.8 470.4 L746.8 476.7Z" fill="#000" stroke="#000" stroke-width="0.6"/>
 <!-- atom -->
 <g transform="translate(914,465.5) scale(1.12)">
  <ellipse rx="8.8" ry="4.6" transform="rotate(45)" stroke-width="1.8"/>
  <ellipse rx="8.8" ry="4.6" transform="rotate(-45)" stroke-width="1.8"/>
  <circle r="2.3" fill="#000" stroke="none"/>
  <circle cx="-5.6" cy="-7.3" r="1.3" fill="#f0f0f0" stroke-width="0.9"/>
  <circle cx="3.6" cy="6.3" r="1.3" fill="#f0f0f0" stroke-width="0.9"/>
 </g>
 <!-- file plus -->
 <path d="M961 472.5 V473 Q961 473.8 960.2 473.8 H952.4 Q951.6 473.8 951.6 473 V458 Q951.6 457.2 952.4 457.2 H959.5 L964.6 462.3 V466.5 M959.3 457.5 V462.5 H964.3" stroke-width="1.8"/>
 <path d="M962 468 H967.4 V470.3 H969.7 V475.7 H967.4 V478 H962 V475.7 H959.7 V470.3 H962Z" fill="#000" stroke="none"/>
 <path d="M964.7 468.8 V477.2 M960.5 473 H968.9" stroke="#22dd22" stroke-width="2.2" stroke-linecap="butt"/>
 <!-- file minus -->
 <path d="M993.5 473.8 H987.6 Q986.8 473.8 986.8 473 V458 Q986.8 457.2 987.6 457.2 H994.7 L999.8 462.3 V470.8 M994.5 457.5 V462.5 H999.5" stroke-width="1.8"/>
 <rect x="994.2" y="471.4" width="10" height="4.8" fill="#000" stroke="none"/>
 <path d="M995.4 473.8 H1003" stroke="#ee2222" stroke-width="2" stroke-linecap="butt"/>
 <!-- spin triangles -->
 <g fill="#000" stroke="none">
  <path d="M857.1 517.2 H864.2 L860.65 513.4Z"/>
  <path d="M857.1 526.9 H864.2 L860.65 530.6Z"/>
  <path d="M857.1 544.6 H864.2 L860.65 540.8Z"/>
  <path d="M857.1 554.8 H864.2 L860.65 558.8Z"/>
  <path d="M730.3 613.2 V624.5 L723.6 618.85Z"/>
  <path d="M870.8 613.2 V624.5 L877.6 618.85Z"/>
 </g>
</svg>
</body></html>
